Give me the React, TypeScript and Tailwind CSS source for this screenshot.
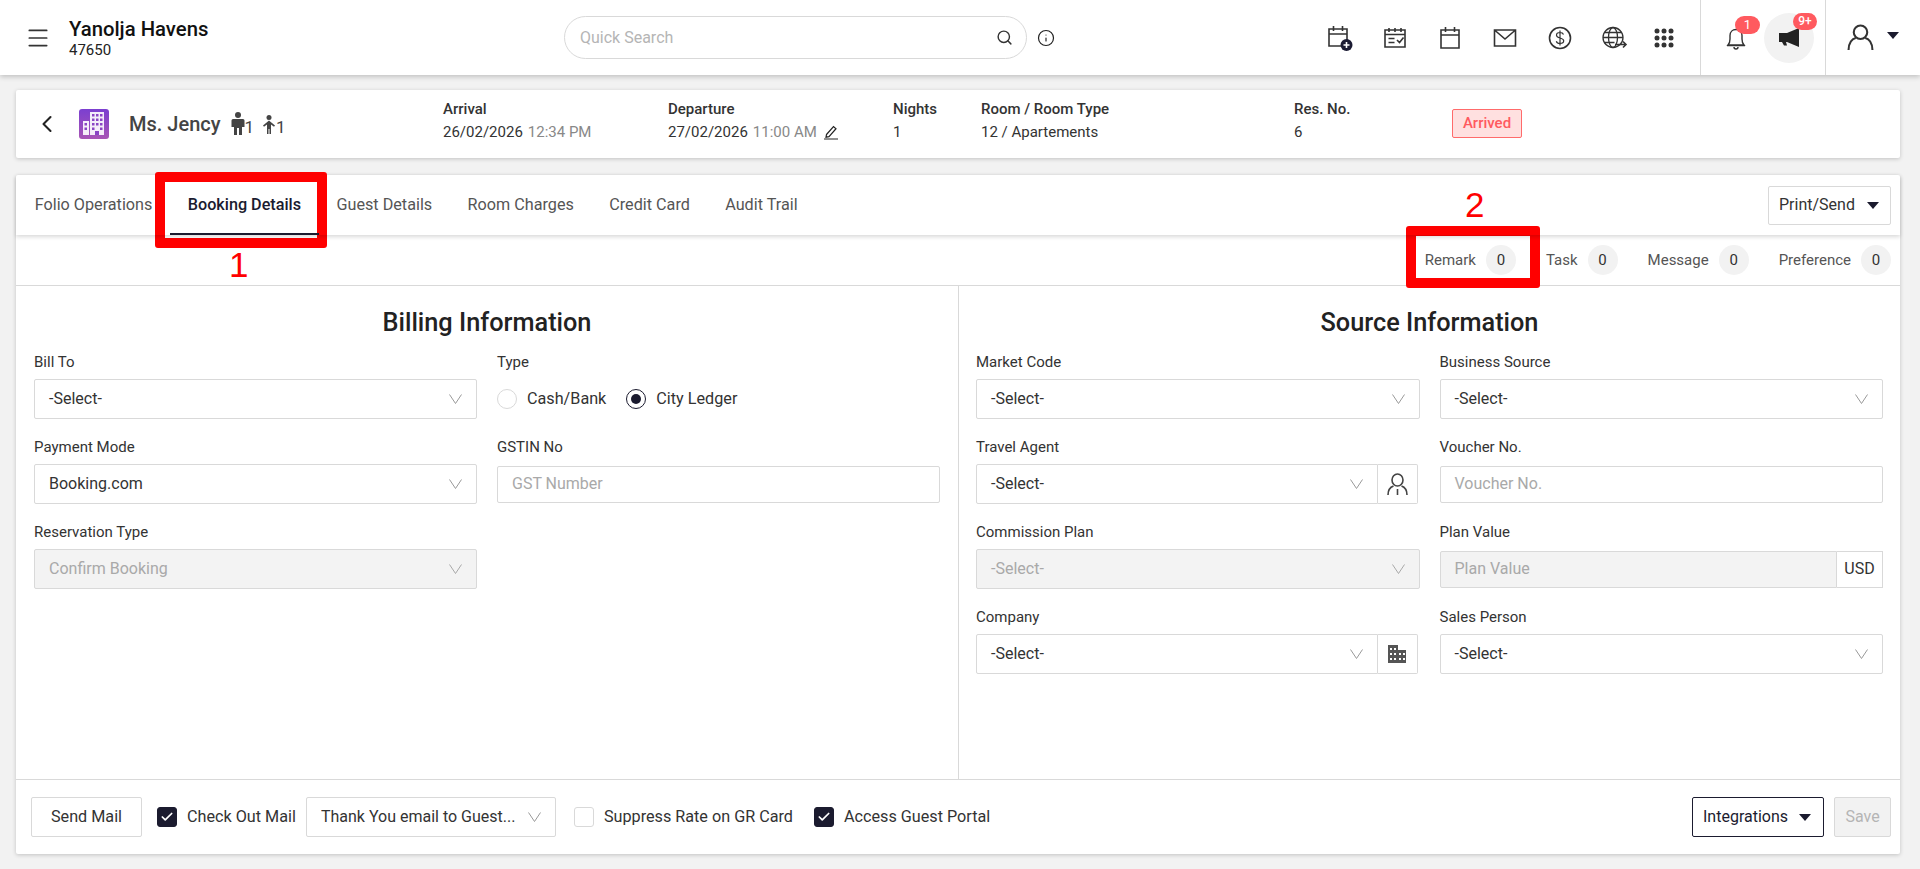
import React from "react";
import { Menu, Search, Info, ChevronLeft, Check } from "lucide-react";

const Vee = ({ disabled }: { disabled?: boolean }) => (
  <svg width="13" height="10" viewBox="0 0 13 10" fill="none" stroke={disabled ? "#a8a8a8" : "#9a9a9a"} strokeWidth="1"><path d="M.5 .5 6.500 9.500 12.500 .5" /></svg>
);

const Caret = ({ className = "" }: { className?: string }) => (
  <svg width="12" height="7" viewBox="0 0 12 7" className={className}><path d="M0 0h12L6 7z" fill="#1a1a2e" /></svg>
);

const Person = ({ size = 26, color = "#333" }: { size?: number; color?: string }) => (
  <svg width={size} height={size} viewBox="0 0 26 26" fill="none" stroke={color} strokeWidth="2"><circle cx="13" cy="8" r="6.500" /><path d="M1.500 25c0-7 3.500-11 7-11.500M24.500 25c0-7-3.500-11-7-11.500" /></svg>
);

const CalPlus = () => (
  <svg width="26" height="26" viewBox="0 0 26 26" fill="none" stroke="#333" strokeWidth="1.6"><path d="M2 4h18v17H2zM2 9h18M6.500 1v5M15.500 1v5" /><circle cx="19.500" cy="20" r="6" fill="#1b1b33" stroke="none" /><path d="M19.500 17v6M16.500 20h6" stroke="#fff" strokeWidth="1.6" /></svg>
);
const CalCheck = () => (
  <svg width="24" height="22" viewBox="0 0 24 22" fill="none" stroke="#333" strokeWidth="1.6"><path d="M2 3h20v17H2zM2 7.500h20M6 1v4M12 1v4M18 1v4M5.500 11.500h6M5.500 15.500h6M14 13l2.500 2.500 4-5" /></svg>
);
const Cal = () => (
  <svg width="22" height="24" viewBox="0 0 22 24" fill="none" stroke="#333" strokeWidth="1.6"><path d="M2 4h18v18H2zM2 9h18M6.500 1v5M15.500 1v5" /></svg>
);
const Mail = () => (
  <svg width="24" height="20" viewBox="0 0 24 20" fill="none" stroke="#333" strokeWidth="1.6"><path d="M1.500 2h21v16h-21zM1.500 2 12 11 22.500 2" /></svg>
);
const Dollar = () => (
  <svg width="24" height="24" viewBox="0 0 24 24" fill="none" stroke="#333" strokeWidth="1.6"><circle cx="12" cy="12" r="10.500" /><path d="M15.500 8.500c-.5-1.400-2-2-3.500-2-2 0-3.500 1-3.500 2.700 0 3.600 7.200 2 7.200 5.600 0 1.700-1.600 2.700-3.700 2.700-1.700 0-3.200-.8-3.700-2.300M12 4.500v15" strokeWidth="1.2" /></svg>
);
const Globe = () => (
  <svg width="26" height="24" viewBox="0 0 26 24" fill="none" stroke="#333" strokeWidth="1.3"><circle cx="11" cy="11.500" r="10" /><ellipse cx="11" cy="11.500" rx="4.500" ry="10" /><path d="M1 11.500h20M2.500 6.500h17M2.500 16.500h10" /><path d="M13 18.500h11M21 15.500l3 3-3 3" strokeWidth="1.600" fill="#fff" /></svg>
);
const Dots = () => (
  <svg width="20" height="20" viewBox="0 0 20 20" fill="#333">{[3, 10, 17].flatMap((y) => [3, 10, 17].map((x) => <circle key={`${x}-${y}`} cx={x} cy={y} r="2.500" />))}</svg>
);
const Bell = () => (
  <svg width="20" height="24" viewBox="0 0 20 24" fill="none" stroke="#333" strokeWidth="1.4"><path d="M2 19c1.500-1.500 2-3 2-6V9.500c0-3.500 2.500-6 6-6s6 2.500 6 6V13c0 3 .5 4.500 2 6zM1 19.500h18M8 21a2 2 0 0 0 4 0" /></svg>
);
const Megaphone = () => (
  <svg width="22" height="20" viewBox="0 0 22 20" fill="#222"><path d="M21 0v19L9 14H1V5h8z" /><path d="M4 14h4l1 3.500H6z" /></svg>
);
const Pencil = () => (
  <svg width="16" height="16" viewBox="0 0 16 16" fill="none" stroke="#222" strokeWidth="1.2"><path d="M3.500 10.500 10.500 2.500l2.500 2.200-7 8-3 .5zM1 15h14" /></svg>
);
const Building = () => (
  <svg width="18" height="18" viewBox="0 0 18 18" fill="#555"><path d="M0 0h10v5h8v13H0z" /><path d="M2 3h2v2H2zM6 3h2v2H6zM2 8h2v2H2zM6 8h2v2H6zM11 8h2v2h-2zM15 8h2v2h-2zM2 13h2v2H2zM6 13h2v2H6zM11 13h2v2h-2zM15 13h2v2h-2z" fill="#fff" /></svg>
);
const AgentIcon = () => (
  <svg width="21" height="23" viewBox="0 0 21 23" fill="none" stroke="#444" strokeWidth="1.6"><ellipse cx="10.500" cy="7" rx="5.500" ry="6" /><path d="M1 22c0-5 2.500-8 5.500-9M20 22c0-5-2.500-8-5.500-9M10.500 16v6" /></svg>
);
const Adult = () => (
  <svg width="14" height="24" viewBox="0 0 14 24" fill="#444"><circle cx="7" cy="3" r="3" /><path d="M2 7h10a1.500 1.500 0 0 1 1.500 1.500V15H11v8H8v-7H6v7H3v-8H.5V8.500A1.500 1.500 0 0 1 2 7z" /></svg>
);
const Child = () => (
  <svg width="14" height="20" viewBox="0 0 14 20" fill="#444"><circle cx="7" cy="2.500" r="2.500" /><path d="M7 5.500l6 5-1 1.200-3-2.200V19H7.500v-5h-1v5H5V9.500l-3 2.200-1-1.200z" /></svg>
);
const Logo = () => (
  <svg width="30" height="30" viewBox="0 0 30 30">
    <defs>
      <linearGradient id="lg" x1="0" y1="0" x2="0" y2="1"><stop offset="0" stopColor="#7b3fd0" /><stop offset="1" stopColor="#a855b5" /></linearGradient>
    </defs>
    <rect width="30" height="30" rx="3" fill="url(#lg)" />
    <path d="M11 3h14v23H11zM4 12h6v14H4z" fill="#fff" opacity=".9" />
    <path d="M13 5h2.500v2.500H13zM17 5h2.500v2.500H17zM21 5h2.500v2.500H21zM13 9.500h2.500V12H13zM17 9.500h2.500V12H17zM21 9.500h2.500V12H21zM13 14h2.500v2.500H13zM17 14h2.500v2.500H17zM21 14h2.500v2.500H21zM13 18.500h2.500V21H13zM21 18.500h2.500V21H21zM5.500 14H8v2.500H5.500zM5.500 18.500H8V21H5.500zM16 22h4v4h-4z" fill="#8a45c4" />
  </svg>
);

const Label = ({ children }: { children: React.ReactNode }) => (
  <div className="h-[28px] text-[15px] leading-[20px] text-[#333] pt-px">{children}</div>
);

const Select = ({ value, disabled, addon }: { value: string; disabled?: boolean; addon?: React.ReactNode }) => (
  <div className={`flex h-[40px] ${addon ? "mr-[2px]" : ""}`}>
    <div className={`flex flex-1 min-w-0 items-center justify-between border border-[#d9d9d9] pl-[14px] pr-[14px] text-[16px] ${addon ? "rounded-l-[2px]" : "rounded-[2px]"} ${disabled ? "bg-[#f3f3f3] text-[#a9a9a9]" : "bg-white text-[#333]"}`}>
      <span>{value}</span>
      <Vee disabled={disabled} />
    </div>
    {addon && <div className="flex w-[40px] items-center justify-center border border-l-0 border-[#d9d9d9] rounded-r-[2px] bg-white">{addon}</div>}
  </div>
);

const TextInput = ({ placeholder, disabled, addon }: { placeholder: string; disabled?: boolean; addon?: string }) => (
  <div className="flex h-[40px] items-center">
    <div className={`flex h-[37px] flex-1 items-center border border-[#d9d9d9] px-[14px] text-[16px] text-[#a9a9a9] rounded-l-[2px] ${addon ? "" : "rounded-r-[2px]"} ${disabled ? "bg-[#f3f3f3]" : "bg-white"}`}>{placeholder}</div>
    {addon && <div className="flex h-[37px] w-[46px] items-center justify-center border border-l-0 border-[#d9d9d9] text-[16px] text-[#333]">{addon}</div>}
  </div>
);

const Field = ({ label, children }: { label: string; children: React.ReactNode }) => (
  <div className="h-[85px]">
    <Label>{label}</Label>
    {children}
  </div>
);

const Radio = ({ on, label }: { on?: boolean; label: string }) => (
  <div className="flex items-center gap-[10px]">
    <span className={`flex h-[20px] w-[20px] items-center justify-center rounded-full border ${on ? "border-[#1b1b2f]" : "border-[#d9d9d9]"}`}>
      {on && <span className="h-[10px] w-[10px] rounded-full bg-[#1b1b2f]" />}
    </span>
    <span className="text-[16.200px] text-[#333]">{label}</span>
  </div>
);

const Checkbox = ({ on }: { on?: boolean }) => (
  <span className={`flex h-[20px] w-[20px] shrink-0 items-center justify-center rounded-[3px] border ${on ? "border-[#1b1b2f] bg-[#1b1b2f]" : "border-[#d9d9d9] bg-white"}`}>
    {on && <Check size={14} strokeWidth={3} color="#fff" />}
  </span>
);

const Info2 = ({ title, children, className }: { title: string; children: React.ReactNode; className: string }) => (
  <div className={`${className} mb-[7px]`}>
    <div className="text-[15px] leading-[20px] font-medium text-[#333]">{title}</div>
    <div className="mt-[3px] text-[15px] leading-[20px] text-[#333] flex items-center">{children}</div>
  </div>
);

const Counter = ({ label }: { label: string }) => (
  <div className="flex items-center gap-[10px]">
    <span className="text-[15px] text-[#555]">{label}</span>
    <span className="flex h-[30px] w-[30px] items-center justify-center rounded-full bg-[#f2f2f2] text-[15px] text-[#333]">0</span>
  </div>
);

const tabs = ["Folio Operations", "Booking Details", "Guest Details", "Room Charges", "Credit Card", "Audit Trail"];

export default function App() {
  return (
    <div className="relative min-h-[869px] overflow-hidden bg-[#f2f2f2] text-[#333]" style={{ fontFamily: "Roboto, sans-serif" }}>
      {/* Header */}
      <header className="flex h-[75px] items-stretch bg-white shadow-[0_2px_5px_rgba(0,0,0,0.2)] relative">
        <div className="flex w-[564px] shrink-0 items-center pl-[25px]">
          <Menu size={26} strokeWidth={1.6} color="#333" />
          <div className="ml-[18px]">
            <div className="text-[20.300px] leading-[24px] font-medium text-[#111]">Yanolja Havens</div>
            <div className="text-[15px] leading-[18px] text-[#222]">47650</div>
          </div>
        </div>
        <div className="flex items-center">
          <div className="flex h-[43px] w-[463px] items-center justify-between rounded-full border border-[#d9d9d9] pl-[15px] pr-[13px]">
            <span className="text-[16px] text-[#b5b5b5]">Quick Search</span>
            <Search size={17} strokeWidth={2} color="#333" />
          </div>
          <Info size={18} strokeWidth={1.6} color="#222" className="ml-[10px]" />
        </div>
        <div className="ml-auto flex items-center pr-[15px]">
          <span className="flex w-[55px] justify-center"><CalPlus /></span>
          <span className="flex w-[55px] justify-center"><CalCheck /></span>
          <span className="flex w-[55px] justify-center"><Cal /></span>
          <span className="flex w-[55px] justify-center"><Mail /></span>
          <span className="flex w-[55px] justify-center"><Dollar /></span>
          <span className="flex w-[55px] justify-center"><Globe /></span>
          <span className="flex w-[43px] justify-center"><Dots /></span>
        </div>
        <div className="flex w-[126px] items-center border-x border-[#d9d9d9] pl-[25px]">
          <div className="relative"><Bell /><span className="absolute -right-[14px] -top-[10px] flex h-[18px] w-[25px] items-center justify-center rounded-full bg-[#ff5a5f] text-[13px] text-white">1</span></div>
          <div className="relative ml-[18px] flex h-[50px] w-[50px] items-center justify-center rounded-full bg-[#f2f2f2]">
            <Megaphone />
            <span className="absolute -right-[3px] top-0 flex h-[17px] w-[24px] items-center justify-center rounded-full bg-[#ff5a5f] text-[12px] font-medium text-white">9+</span>
          </div>
        </div>
        <div className="flex w-[94px] items-center pl-[21px]">
          <Person size={27} />
          <Caret className="ml-[13px] mb-[5px]" />
        </div>
      </header>

      {/* Guest summary */}
      <section className="mt-[15px] ml-[16px] flex h-[68px] w-[1884px] items-center rounded-[2px] bg-white shadow-[0_1px_4px_rgba(0,0,0,0.2)]">
        <ChevronLeft size={28} strokeWidth={1.8} color="#222" className="ml-[17px] shrink-0" />
        <div className="ml-[18px] shrink-0"><Logo /></div>
        <div className="ml-[20px] flex w-[314px] items-center">
          <span className="text-[20px] font-medium text-[#444]">Ms. Jency</span>
          <span className="ml-[10px]"><Adult /></span>
          <span className="mt-[7px] text-[17px] text-[#444]">1</span>
          <span className="ml-[8px] mt-[2px]"><Child /></span>
          <span className="mt-[7px] text-[17px] text-[#444]">1</span>
        </div>
        <Info2 title="Arrival" className="w-[225px]"><span>26/02/2026</span><span className="ml-[5px] text-[#888]">12:34 PM</span></Info2>
        <Info2 title="Departure" className="w-[225px]"><span>27/02/2026</span><span className="ml-[5px] text-[#888]">11:00 AM</span><span className="ml-[6px]"><Pencil /></span></Info2>
        <Info2 title="Nights" className="w-[88px]">1</Info2>
        <Info2 title="Room / Room Type" className="w-[313px]">12 / Apartements</Info2>
        <Info2 title="Res. No." className="w-[158px]">6</Info2>
        <span className="mb-[2px] flex h-[29px] w-[70px] items-center justify-center rounded-[2px] border border-[#ff6b6b] bg-[#ffe0e0] text-[15px] font-medium text-[#ff5a5f]">Arrived</span>
      </section>

      {/* Main card */}
      <section className="mt-[17px] ml-[16px] flex h-[679px] w-[1884px] flex-col rounded-[2px] bg-white shadow-[0_1px_4px_rgba(0,0,0,0.2)]">
        <div className="relative z-10 flex h-[60px] items-center justify-between pl-[1px] pr-[9px] shadow-[0_2px_4px_rgba(0,0,0,0.15)]">
          <div className="flex h-full">
            {tabs.map((t, i) => (
              <div key={t} className={`flex h-full items-center px-[17.700px] text-[16.200px] ${i === 1 ? "border-b-2 border-[#1b1b2f] font-medium text-[#1b1b2f] pt-[2px]" : "text-[#555]"}`}>{t}</div>
            ))}
          </div>
          <div className="flex h-[39px] w-[123px] items-center justify-between rounded-[2px] border border-[#d9d9d9] pl-[10px] pr-[11px] text-[16px] text-[#333]">
            Print/Send <Caret />
          </div>
        </div>
        <div className="flex h-[51px] items-center justify-end gap-[30px] border-b border-[#d9d9d9] pr-[9px]">
          <Counter label="Remark" /><Counter label="Task" /><Counter label="Message" /><Counter label="Preference" />
        </div>

        <div className="flex flex-1 min-h-0">
          <div className="w-[943px] border-r border-[#d9d9d9] px-[18px] pt-[21px]">
            <h2 className="mb-[12px] h-[32px] text-center text-[25.300px] leading-[32px] font-medium text-[#222]">Billing Information</h2>
            <div className="grid grid-cols-2 gap-x-[20px]">
              <Field label="Bill To"><Select value="-Select-" /></Field>
              <Field label="Type"><div className="flex h-[40px] items-center gap-[20px]"><Radio label="Cash/Bank" /><Radio on label="City Ledger" /></div></Field>
              <Field label="Payment Mode"><Select value="Booking.com" /></Field>
              <Field label="GSTIN No"><TextInput placeholder="GST Number" /></Field>
              <Field label="Reservation Type"><Select value="Confirm Booking" disabled /></Field>
            </div>
          </div>
          <div className="flex-1 px-[17px] pt-[21px]">
            <h2 className="mb-[12px] h-[32px] text-center text-[25.300px] leading-[32px] font-medium text-[#222]">Source Information</h2>
            <div className="grid grid-cols-2 gap-x-[20px]">
              <Field label="Market Code"><Select value="-Select-" /></Field>
              <Field label="Business Source"><Select value="-Select-" /></Field>
              <Field label="Travel Agent"><Select value="-Select-" addon={<AgentIcon />} /></Field>
              <Field label="Voucher No."><TextInput placeholder="Voucher No." /></Field>
              <Field label="Commission Plan"><Select value="-Select-" disabled /></Field>
              <Field label="Plan Value"><TextInput placeholder="Plan Value" disabled addon="USD" /></Field>
              <Field label="Company"><Select value="-Select-" addon={<Building />} /></Field>
              <Field label="Sales Person"><Select value="-Select-" /></Field>
            </div>
          </div>
        </div>

        <div className="flex h-[75px] items-center border-t border-[#d9d9d9] pl-[15px] pr-[9px] text-[16.200px]">
          <div className="flex h-[40px] w-[111px] items-center justify-center rounded-[2px] border border-[#d9d9d9] text-[#333]">Send Mail</div>
          <div className="ml-[15px]"><Checkbox on /></div>
          <span className="ml-[10px] text-[#333]">Check Out Mail</span>
          <div className="ml-[10px] flex h-[40px] w-[250px] items-center justify-between rounded-[2px] border border-[#d9d9d9] pl-[14px] pr-[14px] text-[16px] text-[#333]">
            <span className="truncate">Thank You email to Guest...</span><span className="ml-[8px] shrink-0"><Vee /></span>
          </div>
          <div className="ml-[18px]"><Checkbox /></div>
          <span className="ml-[10px] text-[#333]">Suppress Rate on GR Card</span>
          <div className="ml-[21px]"><Checkbox on /></div>
          <span className="ml-[10px] text-[#333]">Access Guest Portal</span>
          <div className="ml-auto flex h-[40px] w-[132px] items-center justify-between rounded-[2px] border border-[#1b1b2f] pl-[10px] pr-[12px] text-[16px] text-[#1b1b2f]">Integrations <Caret /></div>
          <div className="ml-[10px] flex h-[40px] w-[57px] items-center justify-center rounded-[2px] border border-[#d9d9d9] bg-[#f2f2f2] text-[16px] text-[#b5b5b5]">Save</div>
        </div>
      </section>

      {/* Annotations laid over the screenshot */}
      <div className="absolute left-[155px] top-[172px] h-[76px] w-[172px] rounded-[3px] border-[10px] border-[#ff0000]" />
      <div className="absolute left-[1406px] top-[226px] h-[62px] w-[134px] rounded-[3px] border-[10px] border-[#ff0000]" />
      <div className="absolute left-[229px] top-[245px] text-[35px] leading-[40px] text-[#ff0000]" style={{ fontFamily: '"Liberation Sans", sans-serif' }}>1</div>
      <div className="absolute left-[1465px] top-[185px] text-[35px] leading-[40px] text-[#ff0000]" style={{ fontFamily: '"Liberation Sans", sans-serif' }}>2</div>
    </div>
  );
}
